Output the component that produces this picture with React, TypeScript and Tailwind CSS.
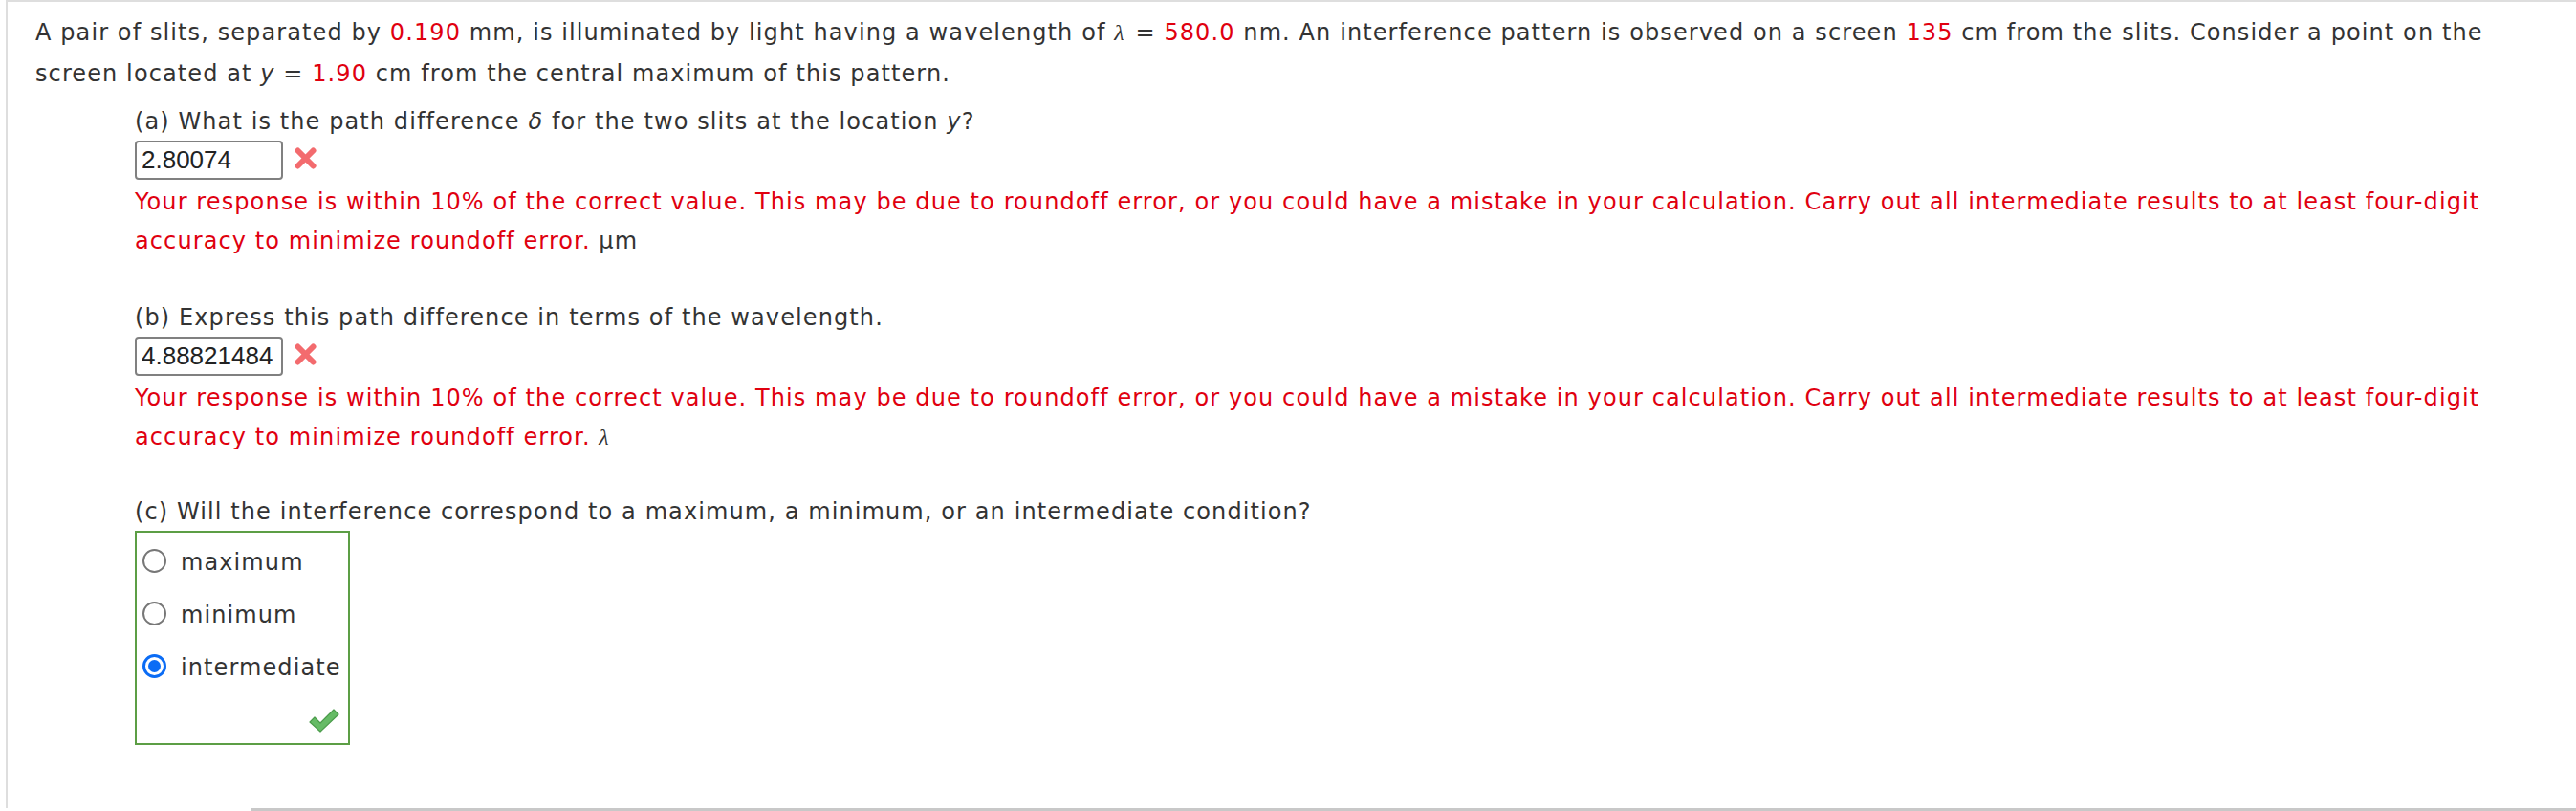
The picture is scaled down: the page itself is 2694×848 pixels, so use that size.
import React from "react";

const red = "text-[#e0000f]";

function WrongMark() {
    return (
        <svg width="25" height="25" viewBox="0 0 25 25" className="ml-[11px] mt-[6px]">
            <g stroke="#f25b5f" strokeWidth="6" strokeLinecap="round" opacity="0.9">
                <line x1="4.5" y1="4.5" x2="20.5" y2="20.5" />
                <line x1="20.5" y1="4.5" x2="4.5" y2="20.5" />
            </g>
        </svg>
    );
}

function CheckMark() {
    return (
        <svg width="32" height="25" viewBox="0 0 32 25">
            <path
                d="M1 14 L6 9 L12 15 L26 1 L31 6 L12 24 Z"
                fill="#66bb66"
                stroke="#4c9c4c"
                strokeWidth="1.2"
                strokeLinejoin="round"
            />
        </svg>
    );
}

function Radio({ checked }: { checked?: boolean }) {
    if (checked) {
        return (
            <div className="w-[25px] h-[25px] rounded-full border-[3px] border-[#0b6cf5] p-[3px] bg-white mb-[4px] shrink-0">
                <div className="w-full h-full rounded-full bg-[#0b6cf5]" />
            </div>
        );
    }
    return <div className="w-[25px] h-[25px] rounded-full border-2 border-[#777] bg-white mb-[4px] shrink-0" />;
}

function AnswerBox({ value }: { value: string }) {
    return (
        <div className="flex items-start">
            <div className="w-[155px] h-[41px] border-2 border-[#808080] rounded-[4px] pl-[5px] flex items-center font-['Liberation_Sans',Arial,sans-serif] text-[26px] tracking-normal text-[#222]">
                {value}
            </div>
            <WrongMark />
        </div>
    );
}

function Feedback({ unit }: { unit: React.ReactNode }) {
    return (
        <p className={`mt-[3px] leading-[41px] ${red}`}>
            Your response is within 10% of the correct value. This may be due to roundoff error, or you could have a mistake in
            your calculation. Carry out all intermediate results to at least four-digit accuracy to minimize roundoff error.{" "}
            <span className="text-[#333]">{unit}</span>
        </p>
    );
}

const lam = <i className="font-['Liberation_Serif',serif] pr-[2px]">λ</i>;

export default function App() {
    const options = [
        { label: "maximum" },
        { label: "minimum" },
        { label: "intermediate", checked: true },
    ];

    return (
        <div className="w-[2694px] h-[848px] bg-white flex flex-col overflow-hidden font-['DejaVu_Sans',Verdana,sans-serif] text-[24px] tracking-[1.1px] text-[#333]">
            <div className="flex-1 ml-[6px] border-t-2 border-l-2 border-[#dedede] pl-[29px] pr-[44px] pt-[11px]">
                <p className="leading-[43px]">
                    A pair of slits, separated by <span className={red}>0.190</span> mm, is illuminated by light having a wavelength of{" "}
                    {lam} = <span className={red}>580.0</span> nm. An interference pattern is observed on a screen{" "}
                    <span className={red}>135</span> cm from the slits. Consider a point on the screen located at <i>y</i> ={" "}
                    <span className={red}>1.90</span> cm from the central maximum of this pattern.
                </p>

                <div className="pl-[104px]">
                    <div className="mt-[8px]">
                        <p className="leading-[40px]">
                            (a) What is the path difference <i>δ</i> for the two slits at the location <i>y</i>?
                        </p>
                        <AnswerBox value="2.80074" />
                        <Feedback unit="µm" />
                    </div>

                    <div className="mt-[39px]">
                        <p className="leading-[40px]">(b) Express this path difference in terms of the wavelength.</p>
                        <AnswerBox value="4.88821484" />
                        <Feedback unit={lam} />
                    </div>

                    <div className="mt-[37px]">
                        <p className="leading-[40px]">
                            (c) Will the interference correspond to a maximum, a minimum, or an intermediate condition?
                        </p>
                        <div className="w-[225px] h-[224px] border-2 border-[#5c9e45] pt-[4px] pl-[6px] pr-[9px] flex flex-col">
                            {options.map((o) => (
                                <label key={o.label} className="h-[55px] flex items-center gap-[15px]">
                                    <Radio checked={o.checked} />
                                    <span className="leading-[55px]">{o.label}</span>
                                </label>
                            ))}
                            <div className="flex justify-end mt-[15px]">
                                <CheckMark />
                            </div>
                        </div>
                    </div>
                </div>
            </div>
            <div className="ml-[262px] h-[3px] bg-[#c8c8c8]" />
        </div>
    );
}
